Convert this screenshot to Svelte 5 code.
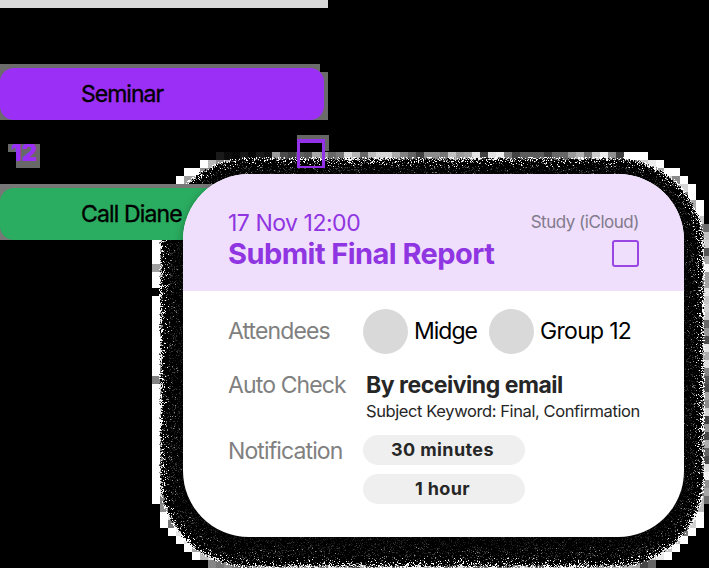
<script>
  // Card and shadow geometry used for the dithered halo
  const W = 709, H = 568, CELL = 8;
  const box = { x0: 183, y0: 181, x1: 681, y1: 544, r: 66 };

  let seed = 1731;
  function rand() {
    seed = (seed * 1664525 + 1013904223) % 4294967296;
    return seed / 4294967296;
  }
  function distance(x, y) {
    const cx = Math.max(box.x0 + box.r, Math.min(box.x1 - box.r, x));
    const cy = Math.max(box.y0 + box.r, Math.min(box.y1 - box.r, y));
    return Math.hypot(x - cx, y - cy) - box.r;
  }

  const cells = [];
  for (let y = 144; y < H; y += CELL) {
    for (let x = 144; x < W; x += CELL) {
      const nx = Math.max(x, Math.min(x + CELL, 433));
      const ny = Math.max(y, Math.min(y + CELL, 362));
      const near = distance(nx, ny);
      const far = Math.max(distance(x, y), distance(x + CELL, y), distance(x, y + CELL), distance(x + CELL, y + CELL));
      if (near > 25.5 || far < 22) continue;
      let v = 255;
      if (y === 152 && x < 624) v = x < 272 ? 6 + rand() * 22 : 55 + rand() * 200;
      else if (x >= 704 || y >= 560) v = 60 + rand() * 190;
      else if (near < 20) v = 110 + rand() * 145;
      if (x === 152 && y === 264) v = 160;
      if (x === 152 && y === 376) v = 130;
      if (x === 152 && y === 288) v = 0;
      v = Math.round(v);
      cells.push({ x, y, fill: `rgb(${v},${v},${v})` });
    }
  }

  const layers = { '#000': '', '#fff': '', '#888': '', '#3a3a3a': '', '#1a1a1a': '' };
  for (let y = 152; y < H; y++) {
    for (let x = 152; x < W; x++) {
      const d = distance(x + 0.5, y + 0.5);
      if (d > 24 || d < -8) continue;
      const p = rand();
      const edge = (d - 14) / 9;
      let c = '#000';
      if (d > 20 && p > 1 - (d - 20) * 0.17) continue;
      if (d > 14) {
        const white = 0.02 + edge * edge * 0.26;
        if (p < white) c = '#fff';
        else if (p < white + 0.06) c = '#888';
        else if (p < white + 0.12) c = '#3a3a3a';
      } else if (p < Math.max(0, d) * 0.002) c = '#888';
      else if (p < 0.03 + Math.max(0, d) * 0.007) c = '#3a3a3a';
      else if (p < 0.22) c = '#1a1a1a';
      layers[c] += `M${x} ${y}h1v1h-1z`;
    }
  }
  const grain = Object.entries(layers);
  const reminders = ['30 minutes', '1 hour'];
</script>

<main>
  <svg class="halo" width={W} height={H} viewBox="0 0 {W} {H}" shape-rendering="crispEdges" aria-hidden="true">
    {#each cells as c}
      <rect x={c.x} y={c.y} width="8" height="8" fill={c.fill} />
    {/each}
    {#each grain as [fill, d]}
      <path {fill} {d} />
    {/each}
  </svg>

  <section class="calendar">
    <div class="topline"></div>
    <div class="event seminar"><span>Seminar</span></div>
    <div class="day">
      <span class="date">12</span>
      <span class="check"></span>
    </div>
    <div class="event call"><span>Call Diane</span></div>
  </section>

  <article class="card">
    <header>
      <div class="row meta">
        <span class="when">17 Nov 12:00</span>
        <span class="source">Study (iCloud)</span>
      </div>
      <div class="row title">
        <h1>Submit Final Report</h1>
        <span class="box"></span>
      </div>
    </header>
    <div class="body">
      <div class="line attendees">
        <span class="label">Attendees</span>
        <i class="avatar"></i><span class="name midge">Midge</span>
        <i class="avatar"></i><span class="name">Group 12</span>
      </div>
      <div class="line auto">
        <span class="label">Auto Check</span>
        <div class="detail">
          <strong>By receiving email</strong>
          <small>Subject Keyword: Final, Confirmation</small>
        </div>
      </div>
      <div class="line notify">
        <span class="label">Notification</span>
        <div class="pills">
          {#each reminders as r}
            <span class="pill">{r}</span>
          {/each}
        </div>
      </div>
    </div>
  </article>
</main>

<style>
  :global(body) { margin: 0; background: #000; }
  main {
    position: relative;
    width: 709px;
    height: 568px;
    overflow: hidden;
    background: #000;
    font-family: Inter, "Liberation Sans", sans-serif;
    color: #000;
    white-space: nowrap;
  }
  .halo { position: absolute; inset: 0; }
  .calendar { position: relative; width: 328px; }
  .topline { height: 8px; background: #d9d9d9; margin-bottom: 56px; }
  .event {
    height: 52px;
    padding: 4px 4px 0 0;
    background: #6b6b6b;
  }
  .event span {
    display: block;
    box-sizing: border-box;
    height: 52px;
    padding-left: 81px;
    line-height: 52px;
    font-size: 23px;
    letter-spacing: -0.85px;
    -webkit-text-stroke: 0.35px #000;
    border-radius: 14px;
    background: #9b2ff5;
  }
  .seminar span { letter-spacing: -1px; }
  .seminar { clip-path: polygon(0 0, 320px 0, 320px 8px, 328px 8px, 328px 100%, 0 100%); }
  .call { width: 212px; background: #777; }
  .call span { background: #2aad60; border-radius: 14px 0 0 14px; }
  .day { height: 64px; display: flex; justify-content: space-between; }
  .date {
    margin: 24px 0 0 8px;
    width: 32px;
    height: 24px;
    box-sizing: border-box;
    padding-left: 3px;
    background: #686868;
    clip-path: polygon(0 0, 100% 0, 100% 100%, 8px 100%, 8px 8px, 0 8px);
    color: #9b2ff5;
    font-size: 24px;
    font-weight: 900;
    line-height: 18px;
    letter-spacing: 0;
  }
  .check {
    box-sizing: border-box;
    width: 28px;
    height: 29px;
    margin: 19px 3px 0 0;
    border: 3px solid #9332e8;
    border-width: 4px 3px 2px 3px;
    box-shadow: 2px -2px 0 2px #666;
    clip-path: polygon(-1px -4px, 32px -4px, 32px 12px, 28px 12px, 28px 29px, -1px 29px);
  }
  .card {
    position: absolute;
    left: 183px;
    top: 174px;
    width: 501px;
    height: 363px;
    border-radius: 66px;
    overflow: hidden;
    background: #fff;
    box-shadow: 0 3px 10px rgba(0, 0, 0, 0.35);
  }
  header {
    box-sizing: border-box;
    height: 117px;
    padding: 33px 45px 0;
    background: #efdffc;
    color: #9035e2;
  }
  .row { display: flex; justify-content: space-between; align-items: center; height: 31px; }
  .when { font-size: 23px; letter-spacing: -0.48px; }
  .source { font-size: 17px; letter-spacing: -0.48px; color: #827a8c; line-height: 20px; padding-bottom: 1px; }
  h1 { margin: 0; font-size: 29px; font-weight: 700; letter-spacing: -0.55px; line-height: 31px; padding-bottom: 1px; }
  .box { width: 23px; height: 23px; border: 2px solid #9a46e4; border-radius: 3px; }
  .body { padding: 18px 0 0 45px; }
  .line { display: flex; }
  .label { width: 135px; color: #808080; font-size: 23px; letter-spacing: -0.88px; flex: none; }
  .attendees { height: 45px; align-items: center; }
  .attendees .label, .name { padding-bottom: 2px; }
  .avatar { width: 45px; height: 45px; border-radius: 50%; background: #d9d9d9; flex: none; }
  .name { font-size: 23px; letter-spacing: -0.7px; margin-left: 6px; }
  .midge { width: 75px; letter-spacing: -1px; }
  .auto { height: 81px; padding-top: 17px; box-sizing: border-box; line-height: 28px; }
  .detail { padding-left: 3px; display: flex; flex-direction: column; color: #262626; }
  strong { font-size: 23px; font-weight: 700; letter-spacing: -0.47px; line-height: 28px; }
  small { font-size: 16.5px; letter-spacing: -0.4px; line-height: 25px; }
  .notify .label { line-height: 32px; }
  .pills { display: flex; flex-direction: column; gap: 9px; }
  .pill {
    width: 162px;
    height: 30px;
    box-sizing: border-box;
    padding-right: 3px;
    border-radius: 15px;
    background: #efefef;
    color: #262626;
    text-align: center;
    font-size: 18px;
    font-weight: 650;
    letter-spacing: 0.4px;
    line-height: 30px;
  }
</style>
